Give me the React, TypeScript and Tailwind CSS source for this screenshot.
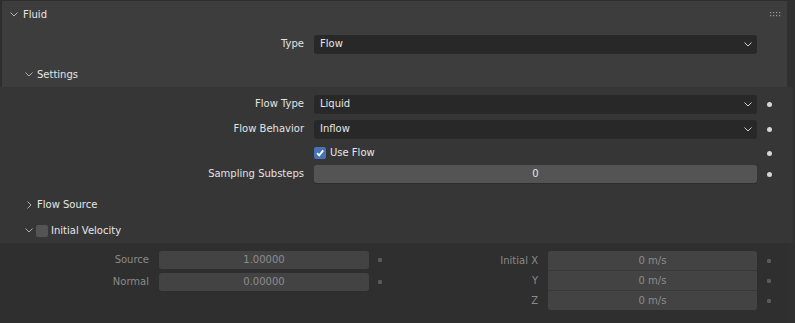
const font = "font-['DejaVu_Sans',sans-serif]";

const ChevronDown = ({ className = '' }: { className?: string }) => (
  <svg width="8" height="5" viewBox="0 0 8 5" className={className}>
    <path d="M0.5 0.5 L4 4 L7.5 0.5" fill="none" stroke="currentColor" strokeWidth="1" />
  </svg>
);

const ChevronRight = ({ className = '' }: { className?: string }) => (
  <svg width="5" height="8" viewBox="0 0 5 8" className={className}>
    <path d="M0.5 0.5 L4 4 L0.5 7.5" fill="none" stroke="currentColor" strokeWidth="1" />
  </svg>
);

const Dot = ({ dim = false }: { dim?: boolean }) => (
  <div className="w-[24px] flex justify-center">
    {dim ? (
      <div className="w-[4px] h-[4px] rounded-[1px] bg-[#595959]" />
    ) : (
      <div className="w-[5px] h-[5px] rounded-full bg-[#d6d6d6]" />
    )}
  </div>
);

const Dropdown = ({ value }: { value: string }) => (
  <div className="flex-1 h-[18px] bg-[#282828] rounded-[3px] flex items-center pl-[6px] pr-[5px] text-[#e6e6e6] shadow-[0_1px_0_#2a2a2a]">
    <span className="flex-1">{value}</span>
    <ChevronDown className="text-[#d0d0d0]" />
  </div>
);

const PropRow = ({ label, children, dot = true }: { label: string; children: React.ReactNode; dot?: boolean }) => (
  <div className="flex items-center h-[18px]">
    <div className="w-[304px] text-right text-[#e3e3e3]">{label}</div>
    <div className="w-[10px]" />
    <div className="w-[443px] flex">{children}</div>
    {dot ? <Dot /> : <div className="w-[24px]" />}
  </div>
);

const SubHeader = ({ label, open, check }: { label: string; open: boolean; check?: boolean }) => (
  <div className="flex items-center h-[25px] pl-[25px] text-[#e6e6e6]">
    <div className="w-[8px] flex justify-center text-[#b0b0b0]">
      {open ? <ChevronDown /> : <ChevronRight />}
    </div>
    {check ? (
      <>
        <div className="w-[12px] h-[12px] ml-[3px] mr-[3px] rounded-[2px] bg-[#545454]" />
        <span>{label}</span>
      </>
    ) : (
      <span className="ml-[4px]">{label}</span>
    )}
  </div>
);

export default function App() {
  return (
    <div className={`${font} text-[10px] leading-none w-[795px] h-[323px] bg-[#303030] overflow-hidden`}>
      <div className="w-[787px] h-[87px] bg-[#3d3d3d] border-l-[2px] border-t border-[#2e2e2e] rounded-tl-[3px]">
        <div className="flex items-center h-[27px] pl-[8px] text-[#e6e6e6]">
          <div className="w-[8px] flex justify-center text-[#b0b0b0]">
            <ChevronDown />
          </div>
          <span className="ml-[5px] flex-1">Fluid</span>
          <svg width="11" height="5" viewBox="0 0 11 5" className="mr-[6px]">
            {[0, 3, 6, 9].map((x) =>
              [0, 3].map((y) => <rect key={`${x}-${y}`} x={x} y={y} width="1.2" height="1.2" fill="#9a9a9a" />)
            )}
          </svg>
        </div>
        <div className="pt-[7px] ml-[-2px]">
          <PropRow label="Type" dot={false}>
            <Dropdown value="Flow" />
          </PropRow>
        </div>
        <div className="mt-[9px] ml-[-2px]">
          <SubHeader label="Settings" open />
        </div>
      </div>
      <div className="w-[793px] h-[156px] bg-[#363636] pt-[8px]">
        <PropRow label="Flow Type">
          <Dropdown value="Liquid" />
        </PropRow>
        <div className="h-[7px]" />
        <PropRow label="Flow Behavior">
          <Dropdown value="Inflow" />
        </PropRow>
        <div className="h-[5px]" />
        <div className="flex items-center h-[18px] mt-[1px]">
          <div className="w-[314px]" />
          <div className="w-[443px] flex items-center text-[#e6e6e6]">
            <div className="w-[12px] h-[12px] rounded-[2px] bg-[#4772b3] flex items-center justify-center">
              <svg width="10" height="10" viewBox="0 0 10 10">
                <path d="M2 5.2 L4.2 7.4 L8.2 2.4" fill="none" stroke="#ffffff" strokeWidth="1.8" />
              </svg>
            </div>
            <span className="ml-[4px]">Use Flow</span>
          </div>
          <Dot />
        </div>
        <div className="h-[3px]" />
        <PropRow label="Sampling Substeps">
          <div className="flex-1 h-[18px] bg-[#545454] rounded-[3px] flex items-center justify-center text-[#e6e6e6] shadow-[0_1px_0_#2d2d2d]">
            0
          </div>
        </PropRow>
        <div className="h-[9px]" />
        <SubHeader label="Flow Source" open={false} />
        <div className="h-[1px]" />
        <SubHeader label="Initial Velocity" open check />
      </div>
      <div className="w-[787px] h-[80px] bg-[#2f2f2f] pt-[8px] flex text-[#8a8a8a]">
        <div className="flex flex-col gap-[4px]">
          {[
            ['Source', '1.00000'],
            ['Normal', '0.00000'],
          ].map(([l, v]) => (
            <div key={l} className="flex items-center h-[18px]">
              <div className="w-[149px] text-right">{l}</div>
              <div className="w-[10px]" />
              <div className="w-[210px] h-[18px] bg-[#434343] rounded-[3px] flex items-center justify-center text-[#8c8c8c]">
                {v}
              </div>
              <div className="w-[22px] flex justify-center">
                <div className="w-[4px] h-[4px] rounded-[1px] bg-[#595959]" />
              </div>
            </div>
          ))}
        </div>
        <div className="flex">
          <div className="w-[147px] flex flex-col gap-[1px] text-right">
            <div className="h-[19px] flex items-center justify-end">Initial X</div>
            <div className="h-[19px] flex items-center justify-end">Y</div>
            <div className="h-[19px] flex items-center justify-end">Z</div>
          </div>
          <div className="w-[10px]" />
          <div className="w-[209px] h-[59px] flex flex-col gap-[1px] rounded-[3px] overflow-hidden bg-[#393939]">
            {['0 m/s', '0 m/s', '0 m/s'].map((v, i) => (
              <div key={i} className="h-[19px] bg-[#434343] flex items-center justify-center text-[#8c8c8c]">
                {v}
              </div>
            ))}
          </div>
          <div className="flex flex-col gap-[1px]">
            <div className="h-[19px] flex items-center"><Dot dim /></div>
            <div className="h-[19px] flex items-center"><Dot dim /></div>
            <div className="h-[19px] flex items-center"><Dot dim /></div>
          </div>
        </div>
      </div>
    </div>
  );
}
